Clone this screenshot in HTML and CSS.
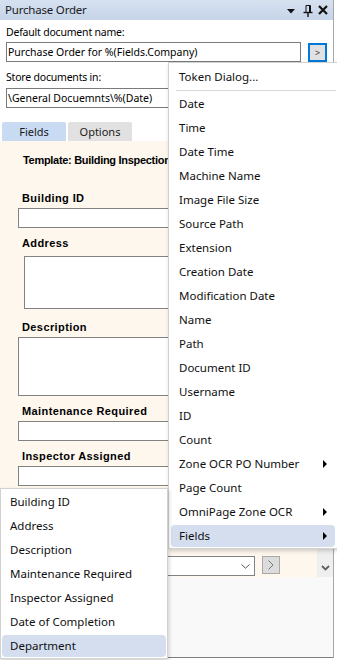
FILE: index.html
```html
<!DOCTYPE html>
<html>
<head>
<meta charset="utf-8">
<link rel="stylesheet" href="styles.css">
</head>
<body>
<div class="panel">
  <div class="titlebar">
    <span class="title">Purchase Order</span>
    <div class="title-icons">
      <svg class="ic-drop" width="8" height="5" viewBox="0 0 8 5"><path d="M0 0H8L4 4.5Z" fill="#111"/></svg>
      <svg class="ic-pin" width="10" height="12" viewBox="0 0 10 12"><path d="M3 0.5H7.5V7M3 0.5V7M6.5 0.5V7" fill="none" stroke="#111" stroke-width="1"/><path d="M0.5 7.5H9.5" stroke="#111" stroke-width="1.4"/><path d="M5 8V12" stroke="#111" stroke-width="1.4"/></svg>
      <svg class="ic-close" width="10" height="10" viewBox="0 0 10 10"><path d="M1 1L9 9M9 1L1 9" stroke="#111" stroke-width="2.2"/></svg>
    </div>
  </div>
  <div class="top">
    <div class="lbl">Default document name:</div>
    <div class="row">
      <div class="txt txt-name">Purchase Order for %(Fields.Company)</div>
      <div class="btn-token">&gt;</div>
    </div>
    <div class="lbl lbl-store">Store documents in:</div>
    <div class="txt txt-store">\General Docuemnts\%(Date)</div>
  </div>
  <div class="tabs">
    <div class="tab tab-active">Fields</div>
    <div class="tab">Options</div>
  </div>
  <div class="content">
    <div class="form">
      <div class="template">Template: Building Inspection</div>
      <div class="flabel fl-first">Building ID</div>
      <div class="finput"></div>
      <div class="flabel">Address</div>
      <div class="farea farea-addr"></div>
      <div class="flabel fl-desc">Description</div>
      <div class="farea farea-desc"></div>
      <div class="flabel">Maintenance Required</div>
      <div class="finput"></div>
      <div class="flabel">Inspector Assigned</div>
      <div class="finput"></div>
      <div class="flabel flabel-hidden"></div>
      <div class="finput"></div>
      <div class="flabel flabel-hidden"></div>
      <div class="frow">
        <div class="fselect">
          <svg width="9" height="5" viewBox="0 0 9 5"><path d="M0.5 0.5L4.5 4.2L8.5 0.5" fill="none" stroke="#555" stroke-width="1"/></svg>
        </div>
        <div class="fbtn">
          <svg width="6" height="10" viewBox="0 0 6 10"><path d="M0.5 0.5L5 5L0.5 9.5" fill="none" stroke="#777" stroke-width="1"/></svg>
        </div>
      </div>
    </div>
    <div class="scrollbar">
      <svg width="9" height="6" viewBox="0 0 9 6"><path d="M1 1L4.5 4.5L8 1" fill="none" stroke="#606060" stroke-width="1.8"/></svg>
    </div>
  </div>
  <div class="bottom"></div>
</div>

<div class="menu main-menu">
  <div class="mi">Token Dialog...</div>
  <div class="sep"></div>
  <div class="mi">Date</div>
  <div class="mi">Time</div>
  <div class="mi">Date Time</div>
  <div class="mi">Machine Name</div>
  <div class="mi">Image File Size</div>
  <div class="mi">Source Path</div>
  <div class="mi">Extension</div>
  <div class="mi">Creation Date</div>
  <div class="mi">Modification Date</div>
  <div class="mi">Name</div>
  <div class="mi">Path</div>
  <div class="mi">Document ID</div>
  <div class="mi">Username</div>
  <div class="mi">ID</div>
  <div class="mi">Count</div>
  <div class="mi sub">Zone OCR PO Number</div>
  <div class="mi">Page Count</div>
  <div class="mi sub">OmniPage Zone OCR</div>
  <div class="mi sub hl">Fields</div>
</div>

<div class="menu sub-menu">
  <div class="mi">Building ID</div>
  <div class="mi">Address</div>
  <div class="mi">Description</div>
  <div class="mi">Maintenance Required</div>
  <div class="mi">Inspector Assigned</div>
  <div class="mi">Date of Completion</div>
  <div class="mi hl">Department</div>
</div>
</body>
</html>
```

FILE: styles.css
```css
html, body {
  margin: 0;
  padding: 0;
  overflow: hidden;
  background: #ffffff;
}
body {
  width: 337px;
  height: 660px;
  position: relative;
  font-family: "Noto Sans", "Segoe UI", sans-serif;
  font-size: 11px;
  color: #000;
}
.panel {
  width: 333px;
  border-right: 1px solid #a8a8a8;
  background: #ffffff;
}
.titlebar {
  height: 20px;
  display: flex;
  align-items: center;
  padding: 0 5px;
  background: linear-gradient(#d6e1f0, #c6d4e9);
}
.title {
  font-size: 11.5px;
  color: #1a1a1a;
  line-height: 20px;
  letter-spacing: -0.2px;
}
.title-icons {
  margin-left: auto;
  display: flex;
  align-items: center;
}
.ic-drop { margin-top: 3px; margin-right: 8px; }
.ic-pin { margin-right: 5px; margin-top: 1px; }
.ic-close { margin-top: 0px; }
.top {
  padding: 0 6px;
}
.lbl {
  font-size: 10.5px;
  line-height: 14px;
  margin-top: 5px;
  letter-spacing: -0.2px;
}
.lbl-store {
  margin-top: 8px;
}
.row {
  display: flex;
  align-items: center;
  margin-top: 3px;
}
.txt {
  box-sizing: border-box;
  height: 20px;
  border: 1px solid #7a7a7a;
  background: #fff;
  font-size: 10.5px;
  line-height: 18px;
  padding-left: 1px;
  white-space: nowrap;
  overflow: hidden;
}
.txt-name {
  width: 295px;
}
.txt-store {
  width: 295px;
  margin-top: 4px;
}
.btn-token {
  box-sizing: border-box;
  width: 19px;
  height: 19px;
  margin-left: 7px;
  border: 2px solid #0078d7;
  background: #e1e1e1;
  font-size: 9px;
  line-height: 15px;
  text-align: center;
  color: #333;
}
.tabs {
  display: flex;
  gap: 2px;
  padding-left: 2px;
  margin-top: 14px;
}
.tab {
  width: 64px;
  height: 19px;
  line-height: 19px;
  text-align: center;
  background: #e1e1e1;
  border-radius: 2px 2px 0 0;
  color: #1a1a1a;
}
.tab-active {
  background: #c8dbf3;
}
.content {
  display: flex;
  height: 436px;
}
.form {
  width: 317px;
  background: #fdf7ee;
  padding-top: 12px;
  box-sizing: border-box;
  font-family: "Liberation Sans", Arial, sans-serif;
  font-size: 11px;
}
.template {
  font-weight: bold;
  line-height: 14px;
  margin-left: 23px;
  white-space: nowrap;
  letter-spacing: -0.3px;
}
.flabel {
  font-weight: bold;
  line-height: 14px;
  height: 14px;
  margin-left: 22px;
  margin-top: 8px;
  letter-spacing: 0.4px;
}
.fl-first { margin-top: 24px; }
.fl-desc { margin-top: 11px; }
.finput {
  box-sizing: border-box;
  height: 20px;
  width: 237px;
  margin: 3px 0 0 18px;
  border: 1px solid #828282;
  background: #fff;
}
.farea {
  box-sizing: border-box;
  border: 1px solid #828282;
  background: #fff;
}
.farea-addr {
  margin: 6px 0 0 24px;
  width: 240px;
  height: 53px;
}
.farea-desc {
  margin: 3px 0 0 18px;
  width: 237px;
  height: 59px;
}
.frow {
  display: flex;
  margin: 3px 0 0 18px;
}
.fselect {
  box-sizing: border-box;
  width: 237px;
  height: 20px;
  border: 1px solid #828282;
  background: #fff;
  display: flex;
  align-items: center;
  justify-content: flex-end;
  padding-right: 4px;
}
.fbtn {
  box-sizing: border-box;
  width: 18px;
  height: 18px;
  margin-left: 7px;
  background: #dcdcdc;
  border: 1px solid #a9a9a9;
  display: flex;
  align-items: center;
  justify-content: center;
}
.scrollbar {
  width: 16px;
  background: #efefef;
  display: flex;
  align-items: flex-end;
  justify-content: center;
  padding-bottom: 6px;
  box-sizing: border-box;
}
.bottom {
  height: 80px;
  background: #f9f9f9;
  border-bottom: 1px solid #7f7f7f;
}
.menu {
  position: absolute;
  box-sizing: border-box;
  display: flex;
  flex-direction: column;
  background: #ffffff;
  border: 1px solid #d2d2d2;
  box-shadow: 1px 2px 4px rgba(0, 0, 0, 0.18);
  font-family: "Noto Sans", "Segoe UI", sans-serif;
  font-size: 11.5px;
}
.main-menu {
  left: 168px;
  top: 62px;
  width: 170px;
  padding: 2px 1px 0 1px;
}
.sub-menu {
  left: 0;
  top: 488px;
  width: 168px;
  padding: 1px 0 0 0;
}
.mi {
  position: relative;
  height: 22px;
  line-height: 22px;
  margin: 1px;
  padding-left: 8px;
  border-radius: 4px;
  white-space: nowrap;
  color: #0f0f0f;
}
.mi.hl {
  background: #d4deef;
}
.mi.sub::after {
  content: "";
  position: absolute;
  right: 8px;
  top: 7px;
  border-left: 4px solid #000;
  border-top: 4px solid transparent;
  border-bottom: 4px solid transparent;
}
.sep {
  height: 1px;
  background: #d8d8d8;
  margin: 1px 0 1px 6px;
}
```
